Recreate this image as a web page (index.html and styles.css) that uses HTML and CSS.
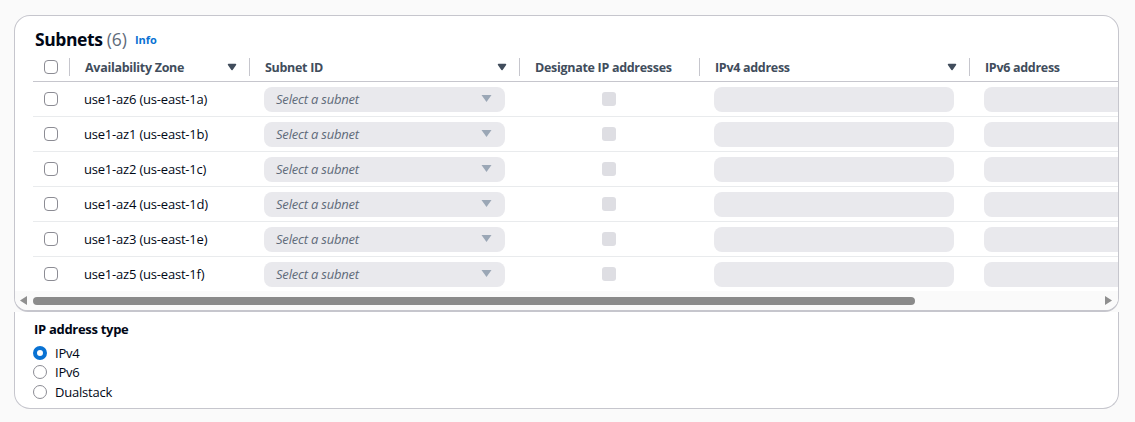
FILE: index.html
```html
<!DOCTYPE html>
<html lang="en">
<head>
<meta charset="utf-8">
<title>Subnets</title>
<link rel="stylesheet" href="styles.css">
</head>
<body>
<div class="card">
  <div class="table-region">
    <div class="title">
      <h2>Subnets <span class="count">(6)</span></h2>
      <a class="info" href="#">Info</a>
    </div>
    <div class="scroll">
      <div class="row head">
        <div class="cell c0"><span class="cb"></span></div>
        <div class="cell c1"><span class="div"></span><span class="lbl">Availability Zone</span><svg class="sort" viewBox="0 0 10 8"><path d="M1.5 1.5h7L5 6.5z"/></svg></div>
        <div class="cell c2"><span class="div"></span><span class="lbl">Subnet ID</span><svg class="sort" viewBox="0 0 10 8"><path d="M1.5 1.5h7L5 6.5z"/></svg></div>
        <div class="cell c3"><span class="div"></span><span class="lbl">Designate IP addresses</span></div>
        <div class="cell c4"><span class="div"></span><span class="lbl">IPv4 address</span><svg class="sort" viewBox="0 0 10 8"><path d="M1.5 1.5h7L5 6.5z"/></svg></div>
        <div class="cell c5"><span class="div"></span><span class="lbl">IPv6 address</span></div>
      </div>
      <div class="row">
        <div class="cell c0"><span class="cb"></span></div>
        <div class="cell c1 zone">use1-az6 (us-east-1a)</div>
        <div class="cell c2"><div class="select"><span>Select a subnet</span><svg class="caret" viewBox="0 0 10 8"><path d="M0 0h10L5 7z"/></svg></div></div>
        <div class="cell c3"><span class="dcb"></span></div>
        <div class="cell c4"><div class="input"></div></div>
        <div class="cell c5"><div class="input"></div></div>
      </div>
      <div class="row">
        <div class="cell c0"><span class="cb"></span></div>
        <div class="cell c1 zone">use1-az1 (us-east-1b)</div>
        <div class="cell c2"><div class="select"><span>Select a subnet</span><svg class="caret" viewBox="0 0 10 8"><path d="M0 0h10L5 7z"/></svg></div></div>
        <div class="cell c3"><span class="dcb"></span></div>
        <div class="cell c4"><div class="input"></div></div>
        <div class="cell c5"><div class="input"></div></div>
      </div>
      <div class="row">
        <div class="cell c0"><span class="cb"></span></div>
        <div class="cell c1 zone">use1-az2 (us-east-1c)</div>
        <div class="cell c2"><div class="select"><span>Select a subnet</span><svg class="caret" viewBox="0 0 10 8"><path d="M0 0h10L5 7z"/></svg></div></div>
        <div class="cell c3"><span class="dcb"></span></div>
        <div class="cell c4"><div class="input"></div></div>
        <div class="cell c5"><div class="input"></div></div>
      </div>
      <div class="row">
        <div class="cell c0"><span class="cb"></span></div>
        <div class="cell c1 zone">use1-az4 (us-east-1d)</div>
        <div class="cell c2"><div class="select"><span>Select a subnet</span><svg class="caret" viewBox="0 0 10 8"><path d="M0 0h10L5 7z"/></svg></div></div>
        <div class="cell c3"><span class="dcb"></span></div>
        <div class="cell c4"><div class="input"></div></div>
        <div class="cell c5"><div class="input"></div></div>
      </div>
      <div class="row">
        <div class="cell c0"><span class="cb"></span></div>
        <div class="cell c1 zone">use1-az3 (us-east-1e)</div>
        <div class="cell c2"><div class="select"><span>Select a subnet</span><svg class="caret" viewBox="0 0 10 8"><path d="M0 0h10L5 7z"/></svg></div></div>
        <div class="cell c3"><span class="dcb"></span></div>
        <div class="cell c4"><div class="input"></div></div>
        <div class="cell c5"><div class="input"></div></div>
      </div>
      <div class="row last">
        <div class="cell c0"><span class="cb"></span></div>
        <div class="cell c1 zone">use1-az5 (us-east-1f)</div>
        <div class="cell c2"><div class="select"><span>Select a subnet</span><svg class="caret" viewBox="0 0 10 8"><path d="M0 0h10L5 7z"/></svg></div></div>
        <div class="cell c3"><span class="dcb"></span></div>
        <div class="cell c4"><div class="input"></div></div>
        <div class="cell c5"><div class="input"></div></div>
      </div>
    </div>
    <div class="scrollbar">
      <svg class="arrow" viewBox="0 0 7 9"><path d="M7 0v9L0 4.5z"/></svg>
      <div class="track"><div class="thumb"></div></div>
      <svg class="arrow" viewBox="0 0 7 9"><path d="M0 0v9l7-4.5z"/></svg>
    </div>
  </div>
  <div class="footer">
    <div class="flabel">IP address type</div>
    <label class="radio"><span class="rb on"></span>IPv4</label>
    <label class="radio"><span class="rb"></span>IPv6</label>
    <label class="radio"><span class="rb"></span>Dualstack</label>
  </div>
</div>
</body>
</html>
```

FILE: styles.css
```css
* { box-sizing: border-box; }
html, body { margin: 0; padding: 0; }
body {
  background: #fafafa;
  font-family: "Open Sans", "Noto Sans", sans-serif;
  font-size: 13px;
  letter-spacing: -0.2px;
  color: #000716;
}
.card {
  margin: 15px 16px 0 14px;
  display: flex;
  flex-direction: column;
}
.table-region {
  background: #fff;
  border: 1px solid #c6c6cd;
  border-bottom-width: 2px;
  border-radius: 16px 16px 14px 14px;
  overflow: hidden;
}
.title {
  height: 36px;
  display: flex;
  align-items: flex-end;
  padding: 0 0 2px 20px;
}
.title h2 {
  margin: 0;
  font-size: 17.5px;
  font-weight: 700;
  line-height: 22px;
  letter-spacing: -0.4px;
  color: #000716;
}
.title .count { font-weight: 400; color: #5f6b7a; letter-spacing: 0; }
.info {
  margin-left: 8px;
  font-size: 11px;
  font-weight: 700;
  color: #0972d3;
  text-decoration: none;
  line-height: 20px;
  letter-spacing: -0.1px;
}
.scroll {
  overflow: hidden;
  padding-left: 18px;
}
.row {
  display: flex;
  width: 1206px;
  height: 35px;
  border-bottom: 1px solid #e9ebed;
  align-items: center;
}
.row.head {
  height: 30px;
  border-bottom: 1px solid #c6c6cd;
  font-weight: 700;
  font-size: 12.5px;
  letter-spacing: -0.3px;
  color: #414d5c;
  padding-top: 1px;
}
.row.last { border-bottom: none; height: 34px; }
.cell { display: flex; align-items: center; height: 100%; flex: none; }
.c0 { width: 36px; padding-left: 11px; }
.c1 { width: 180px; }
.c2 { width: 270px; }
.c3 { width: 180px; justify-content: center; }
.c4 { width: 270px; }
.c5 { width: 270px; }
.head .c3 { justify-content: flex-start; }
.div {
  width: 1px;
  height: 18px;
  background: #c6c6cd;
  flex: none;
}
.lbl { flex: 1; padding-left: 15px; white-space: nowrap; }
.sort { width: 10px; height: 8px; margin-right: 12px; flex: none; }
.sort path { fill: #414d5c; stroke: #414d5c; stroke-width: 1.5; stroke-linejoin: round; }
.zone { padding-left: 15px; white-space: nowrap; padding-bottom: 1px; }
.cb {
  width: 14px;
  height: 14px;
  border: 1px solid #8c8c94;
  border-radius: 4px;
  background: #fff;
}
.dcb {
  width: 14px;
  height: 14px;
  border-radius: 3px;
  background: #dedee3;
}
.select {
  margin-left: 15px;
  width: 241px;
  height: 25px;
  border-radius: 8px;
  background: #e9e9ed;
  display: flex;
  align-items: center;
  justify-content: space-between;
  padding: 0 13px 1px 12px;
  font-style: italic;
  color: #5f6b7a;
}
.caret { width: 11px; height: 8px; }
.caret path { fill: #9ba7b6; }
.input {
  margin-left: 15px;
  width: 240px;
  height: 25px;
  border-radius: 8px;
  background: #e9e9ed;
}
.scrollbar {
  height: 19px;
  display: flex;
  align-items: center;
  padding: 0 6px 0 5px;
  gap: 4px;
  background: #fafafa;
}
.arrow { width: 7px; height: 9px; flex: none; }
.arrow path { fill: #8f8f8f; }
.track { flex: 1; height: 8px; }
.thumb { width: 882px; height: 8px; border-radius: 4px; background: #8a8a8a; margin-left: 2px; }
.footer {
  background: #fff;
  border: 1px solid #c6c6cd;
  border-top: none;
  border-radius: 0 0 16px 16px;
  padding: 8px 20px 6px 18px;
}
.flabel {
  font-weight: 700;
  line-height: 18px;
  margin-bottom: 5px;
  letter-spacing: -0.3px;
  padding-left: 1px;
}
.radio {
  display: flex;
  align-items: center;
  height: 19.5px;
  gap: 8px;
}
.rb {
  width: 14px;
  height: 14px;
  border-radius: 50%;
  border: 1px solid #8c8c94;
  background: #fff;
}
.rb.on {
  border: 4px solid #0972d3;
}
```
